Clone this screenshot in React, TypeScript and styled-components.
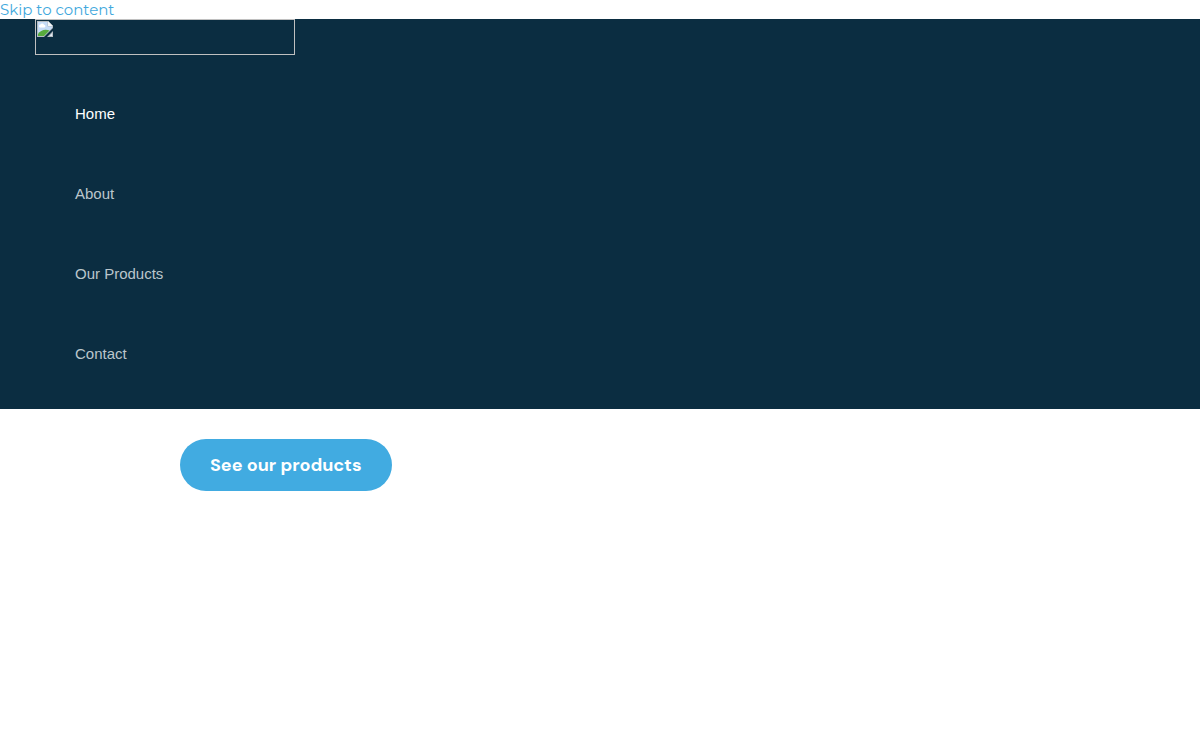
import React from "react";
import styled, { createGlobalStyle } from "styled-components";

const GlobalStyle = createGlobalStyle`
  body {
    margin: 0;
    background: #ffffff;
    font-family: Montserrat, "Open Sans", sans-serif;
    font-size: 15px;
  }
`;

const SkipLink = styled.a`
  display: block;
  width: max-content;
  line-height: 19px;
  color: #41a8dd;
  text-decoration: none;
`;

const Header = styled.header`
  background: #0b2d41;
  padding: 0 35px 15px;
`;

const LogoLink = styled.a`
  display: block;
  box-sizing: border-box;
  width: 260px;
  height: 36px;
  padding: 1px;
  border: 1px solid #c0c0c0;
`;

const BrokenIcon = styled.svg`
  display: block;
`;

const NavList = styled.ul`
  list-style: none;
  margin: 19px 0 0;
  padding: 0 0 0 40px;
`;

const NavItem = styled.li`
  display: flex;
  align-items: center;
  height: 80px;
`;

const NavLink = styled.a<{ $active?: boolean }>`
  color: ${({ $active }) => ($active ? "#ffffff" : "#bbc6cc")};
  font-family: "Liberation Sans", Arial, sans-serif;
  line-height: 20px;
  text-decoration: none;
`;

const Main = styled.main`
  padding: 30px 180px;
`;

const ProductsLink = styled.a`
  display: inline-block;
  padding: 16px 30px;
  border-radius: 26px;
  background: #41abe1;
  color: #ffffff;
  font-family: "DM Sans", Inter, sans-serif;
  font-size: 18px;
  font-weight: 700;
  font-variation-settings: "opsz" 14;
  line-height: 20px;
  text-decoration: none;
`;

const links = ["Home", "About", "Our Products", "Contact"];

export default function App() {
  return (
    <>
      <GlobalStyle />
      <SkipLink href="#content">Skip to content</SkipLink>
      <Header>
        <LogoLink href="#" aria-label="Site logo">
          <BrokenIcon width="16" height="16" viewBox="0 0 16 16" aria-hidden="true">
            <path d="M0 0H11L16 5V7L7 16H0Z" fill="#b5bcc2" />
            <path d="M1 1H10.5V5.5H15V7L7 15H1Z" fill="#c6dcf8" />
            <path d="M11 0L16 5H11Z" fill="#f4f6f8" />
            <path d="M3 6.5a1.500 1.500 0 0 1 .4-2.900A2 2 0 0 1 7 3.800a1.400 1.400 0 0 1 .5 2.700Z" fill="#ffffff" />
            <path d="M1 15V13C3 9.500 8 7.500 12.500 9.500L7 15Z" fill="#57ab3d" />
            <path d="M16 10V16H10Z" fill="#b5bcc2" />
            <path d="M15 12.500V15H12.500Z" fill="#e4edf8" />
          </BrokenIcon>
        </LogoLink>
        <nav aria-label="Main">
          <NavList>
            {links.map((label, i) => (
              <NavItem key={label}>
                <NavLink href="#" $active={i === 0}>{label}</NavLink>
              </NavItem>
            ))}
          </NavList>
        </nav>
      </Header>
      <Main id="content">
        <ProductsLink href="#">See our products</ProductsLink>
      </Main>
    </>
  );
}
